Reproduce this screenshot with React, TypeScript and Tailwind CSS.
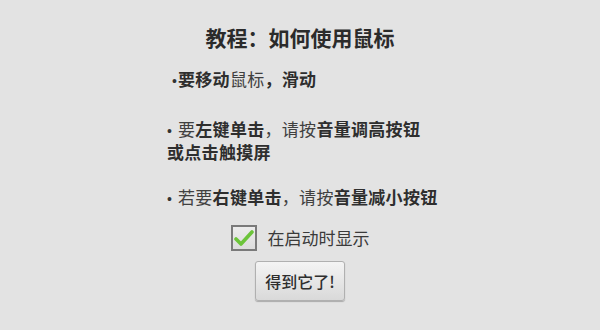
import React from "react";

const B = ({ children }: { children: React.ReactNode }) => (
  <span className="font-bold text-[#2e2e2e]">{children}</span>
);

const Dot = ({ w }: { w: string }) => (
  <span
    className={`${w} inline-block shrink-0 text-[14px] leading-none pt-[5px] text-[#333]`}
    style={{ fontFamily: '"Liberation Sans", sans-serif' }}
  >
    •
  </span>
);

export default function App() {
  return (
    <div
      className="w-[600px] h-[330px] bg-[#e3e3e3] text-[#404040] flex flex-col"
      style={{ fontFamily: '"Noto Sans CJK SC", "Noto Sans", sans-serif' }}
    >
      <div className="mt-[23px] h-[28px] flex items-center justify-center text-[21px] leading-[28px] font-bold text-[#2b2b2b]">
        教程：如何使用鼠标
      </div>
      <div className="ml-[167px] mt-[16px] text-[17px] leading-[23px] tracking-[0.3px]">
        <div className="h-[23px] pl-[5px] flex items-center">
          <Dot w="w-[6px]" />
          <span>
            <B>要移动</B>鼠标<B>，滑动</B>
          </span>
        </div>
        <div className="mt-[27px] flex items-center">
          <Dot w="w-[11px]" />
          <span>
            要<B>左键单击</B>，请按<B>音量调高按钮</B>
          </span>
        </div>
        <div>
          <B>或点击触摸屏</B>
        </div>
        <div className="mt-[22px] flex items-center">
          <Dot w="w-[11px]" />
          <span>
            若要<B>右键单击</B>，请按<B>音量减小按钮</B>
          </span>
        </div>
      </div>
      <div className="mt-[17px] flex items-center justify-center gap-[11px]">
        <div className="w-[26px] h-[26px] border-[2px] border-[#7a7a7a] bg-gradient-to-b from-[#ececec] to-[#dcdcdc] flex items-center justify-center">
          <svg width="20" height="18" viewBox="0 0 20 18">
            <path
              d="M2 10 L7 15 L18 3"
              fill="none"
              stroke="#6cc43a"
              strokeWidth="3.6"
              strokeLinecap="round"
              strokeLinejoin="round"
            />
          </svg>
        </div>
        <span className="text-[17px] text-[#3a3a3a]">在启动时显示</span>
      </div>
      <div className="mt-[10px] flex justify-center">
        <button className="w-[90px] h-[40px] rounded-[3px] border border-[#b0b0b0] bg-gradient-to-b from-[#f4f4f4] to-[#d9d9d9] shadow-[0_1px_1px_rgba(0,0,0,0.25)] text-[16px] font-medium text-[#2e2e2e]">
          得到它了!
        </button>
      </div>
    </div>
  );
}
